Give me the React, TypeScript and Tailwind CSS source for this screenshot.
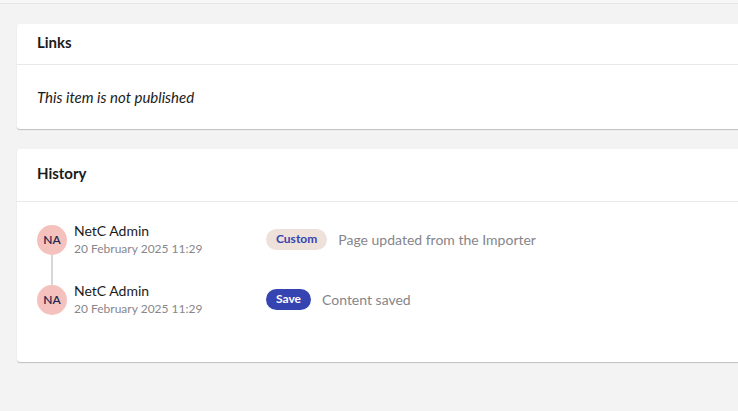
import React from "react";

type Entry = {
  initials: string;
  name: string;
  date: string;
  badge: string;
  badgeKind: "custom" | "save";
  text: string;
};

const entries: Entry[] = [
  {
    initials: "NA",
    name: "NetC Admin",
    date: "20 February 2025 11:29",
    badge: "Custom",
    badgeKind: "custom",
    text: "Page updated from the Importer",
  },
  {
    initials: "NA",
    name: "NetC Admin",
    date: "20 February 2025 11:29",
    badge: "Save",
    badgeKind: "save",
    text: "Content saved",
  },
];

const Card = ({
  title,
  headerClass,
  children,
}: {
  title: string;
  headerClass: string;
  children: React.ReactNode;
}) => (
  <div className="bg-white rounded-[3px] shadow-[0_1px_1px_rgba(0,0,0,0.22)] -mr-4">
    <div className={`flex items-center px-5 pb-[4px] border-b border-[#e9e9eb] ${headerClass}`}>
      <h2 className="text-[15px] font-bold text-[#1b1b1b]">{title}</h2>
    </div>
    {children}
  </div>
);

const App = () => {
  return (
    <div
      className="min-h-screen bg-[#f4f3f4] overflow-hidden"
      style={{ fontFamily: "Lato, 'Open Sans', sans-serif" }}
    >
      <div className="h-[4px] bg-[#f8f7f8] border-b border-[#e6e5e7]" />
      <div className="pl-[17px] pt-5 flex flex-col gap-5">
        <Card title="Links" headerClass="h-[41px]">
          <div className="h-[64px] flex items-center px-5">
            <p className="italic text-[15px] text-[#1b1b1b]">This item is not published</p>
          </div>
        </Card>

        <Card title="History" headerClass="h-[53px]">
          <div className="pt-[23px] pb-[46px] px-5">
            {entries.map((e, i) => (
              <div key={i} className="flex items-start">
                <div className="flex flex-col items-center w-[30px]">
                  <div className="w-[30px] h-[30px] rounded-full bg-[#f5c1bc] flex items-center justify-center text-[12px] font-semibold text-[#1b264f]">
                    {e.initials}
                  </div>
                  {i < entries.length - 1 && <div className="w-[2px] h-[30px] bg-[#d8d7d9]" />}
                </div>
                <div className="w-[192px] ml-[7px] -mt-[3px] leading-tight">
                  <div className="text-[14px] text-[#1b1b1b]">{e.name}</div>
                  <div className="text-[12px] text-[#88878c] mt-[1px]">{e.date}</div>
                </div>
                <div className="flex items-center h-[30px] -mt-[1px] gap-[11px]">
                  {e.badgeKind === "custom" ? (
                    <span className="h-[21px] px-[10px] rounded-full bg-[#ede1da] text-[#3544b1] text-[12px] font-bold flex items-center">
                      {e.badge}
                    </span>
                  ) : (
                    <span className="h-[21px] px-[10px] rounded-full bg-[#3544b1] text-white text-[12px] font-bold flex items-center">
                      {e.badge}
                    </span>
                  )}
                  <span className="text-[14px] text-[#86858a]">{e.text}</span>
                </div>
              </div>
            ))}
          </div>
        </Card>
      </div>
    </div>
  );
};

export default App;
